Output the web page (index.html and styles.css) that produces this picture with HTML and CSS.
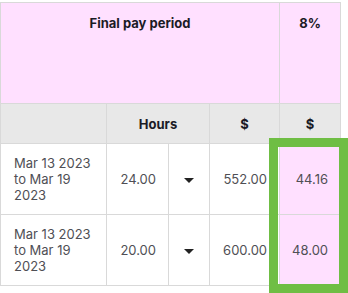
FILE: index.html
```html
<!DOCTYPE html>
<html>
<head>
<meta charset="utf-8">
<link rel="stylesheet" href="styles.css">
</head>
<body>
<div class="wrap">
  <table class="pay">
    <colgroup>
      <col class="c1"><col class="c2"><col class="c3"><col class="c4"><col class="c5">
    </colgroup>
    <thead>
      <tr class="h1">
        <th colspan="4">Final pay period</th>
        <th>8%</th>
      </tr>
      <tr class="h2">
        <th></th>
        <th colspan="2">Hours</th>
        <th>$</th>
        <th>$</th>
      </tr>
    </thead>
    <tbody>
      <tr>
        <td class="date">Mar 13 2023<br>to Mar 19<br>2023</td>
        <td class="num">24.00</td>
        <td class="caret"><span class="tri"></span></td>
        <td class="num">552.00</td>
        <td class="num hl">44.16</td>
      </tr>
      <tr>
        <td class="date">Mar 13 2023<br>to Mar 19<br>2023</td>
        <td class="num">20.00</td>
        <td class="caret"><span class="tri"></span></td>
        <td class="num">600.00</td>
        <td class="num hl">48.00</td>
      </tr>
    </tbody>
  </table>
  <div class="focus"></div>
</div>
</body>
</html>
```
FILE: styles.css
```css
html, body {
  margin: 0;
  padding: 0;
  background: #ffffff;
}
body {
  font-family: Inter, "Open Sans", sans-serif;
  font-size: 13px;
  line-height: 16px;
}
.wrap {
  position: relative;
  padding-top: 2px;
  width: 348px;
  height: 291px;
  overflow: hidden;
}
.pay {
  border-collapse: collapse;
  table-layout: fixed;
  width: 341px;
}
.c1 { width: 106px; }
.c2 { width: 62px; }
.c3 { width: 41px; }
.c4 { width: 70px; }
.c5 { width: 61px; }
.pay th, .pay td {
  border: 1px solid #d9d9d9;
  padding: 0;
}
.pay th {
  color: #1b1b26;
  font-weight: 700;
  text-align: center;
}
.h1 th {
  background: #ffe0ff;
  height: 88px;
  vertical-align: top;
  padding-top: 12px;
}
.h2 th {
  background: #e8e8e8;
  height: 39px;
  vertical-align: middle;
}
.pay td {
  height: 70px;
  color: #4f4f55;
  vertical-align: middle;
}
.date {
  padding-left: 13px !important;
  text-align: left;
}
.num {
  text-align: right;
  padding-right: 12px !important;
}
.caret {
  text-align: center;
}
.tri {
  display: inline-block;
  width: 0;
  height: 0;
  border-left: 5px solid transparent;
  border-right: 5px solid transparent;
  border-top: 5px solid #222;
  vertical-align: middle;
}
.hl {
  background: #ffe0ff;
}
.focus {
  position: absolute;
  left: 269px;
  top: 138px;
  width: 79px;
  height: 155px;
  box-sizing: border-box;
  border: 9px solid #6fbe44;
}
```
